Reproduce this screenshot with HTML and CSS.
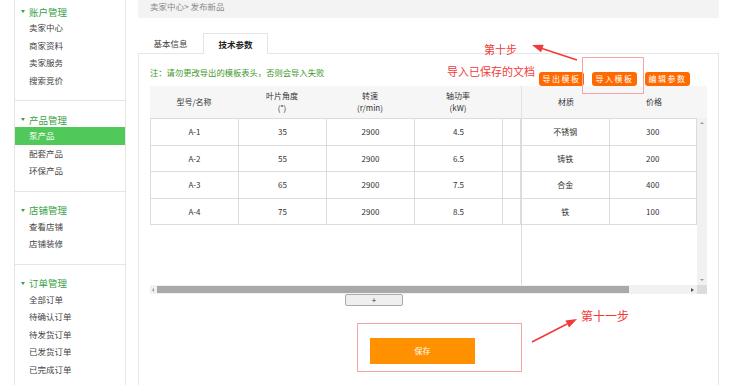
FILE: index.html
```html
<!DOCTYPE html>
<html lang="zh-CN">
<head>
    <meta charset="UTF-8">
    <meta name="viewport" content="width=device-width, initial-scale=1.0">
    <title>发布新品</title>
    <link rel="stylesheet" href="styles.css">
</head>
<body>
    <div class="sidebar">
        <div class="group first">
            <div class="group-title">账户管理</div>
            <div class="menu-item">卖家中心</div>
            <div class="menu-item">商家资料</div>
            <div class="menu-item">卖家服务</div>
            <div class="menu-item">搜索竞价</div>
        </div>
        <div class="group">
            <div class="group-title">产品管理</div>
            <div class="menu-item active">泵产品</div>
            <div class="menu-item">配套产品</div>
            <div class="menu-item">环保产品</div>
        </div>
        <div class="group">
            <div class="group-title">店铺管理</div>
            <div class="menu-item">查看店铺</div>
            <div class="menu-item">店铺装修</div>
        </div>
        <div class="group last">
            <div class="group-title">订单管理</div>
            <div class="menu-item">全部订单</div>
            <div class="menu-item">待确认订单</div>
            <div class="menu-item">待发货订单</div>
            <div class="menu-item">已发货订单</div>
            <div class="menu-item">已完成订单</div>
        </div>
    </div>

    <div class="main">
        <div class="crumb">卖家中心&gt; 发布新品</div>
        <div class="tabs">
            <div class="tab">基本信息</div>
            <div class="tab active">技术参数</div>
        </div>
        <div class="panel">
            <div class="toolbar">
                <div class="note">注：请勿更改导出的模板表头，否则会导入失败</div>
                <div class="tools">
                    <div class="tool-btn">导出模板</div>
                    <div class="tool-btn">导入模板</div>
                    <div class="tool-btn">编辑参数</div>
                </div>
            </div>

            <div class="grid">
                <div class="grid-head">
                    <div class="head-left">
                        <div class="hcell">型号/名称</div>
                        <div class="hcell">叶片角度<br>(°)</div>
                        <div class="hcell">转速<br>(r/min)</div>
                        <div class="hcell">轴功率<br>(kW)</div>
                        <div class="hcell narrow"></div>
                    </div>
                    <div class="head-right">
                        <div class="hcell">材质</div>
                        <div class="hcell">价格</div>
                    </div>
                </div>
                <div class="grid-body">
                    <div class="body-left">
                        <table class="cells">
                            <colgroup><col class="c88"><col class="c88"><col class="c88"><col class="c88"><col></colgroup>
                            <tr><td>A-1</td><td>35</td><td>2900</td><td>4.5</td><td></td></tr>
                            <tr><td>A-2</td><td>55</td><td>2900</td><td>6.5</td><td></td></tr>
                            <tr><td>A-3</td><td>65</td><td>2900</td><td>7.5</td><td></td></tr>
                            <tr><td>A-4</td><td>75</td><td>2900</td><td>8.5</td><td></td></tr>
                        </table>
                    </div>
                    <div class="body-right">
                        <table class="cells">
                            <colgroup><col class="c87"><col></colgroup>
                            <tr><td>不锈钢</td><td>300</td></tr>
                            <tr><td>铸铁</td><td>200</td></tr>
                            <tr><td>合金</td><td>400</td></tr>
                            <tr><td>铁</td><td>100</td></tr>
                        </table>
                    </div>
                    <div class="vbar">
                        <span class="arrow-up"></span>
                        <span class="arrow-down"></span>
                    </div>
                </div>
                <div class="hbar">
                    <div class="htrack">
                        <span class="arrow-left"></span>
                        <span class="thumb"></span>
                        <span class="arrow-right"></span>
                    </div>
                    <div class="corner"></div>
                </div>
            </div>

            <div class="add-row">+</div>
            <div class="save-btn">保存</div>
        </div>
    </div>

    <!-- tutorial marks drawn over the page -->
    <div class="mark-text step-ten">第十步</div>
    <div class="mark-text import-hint">导入已保存的文档</div>
    <div class="mark-text step-eleven">第十一步</div>
    <div class="mark-box box-import"></div>
    <div class="mark-box box-save"></div>
    <svg class="mark-arrows" width="750" height="385" viewBox="0 0 750 385">
        <line x1="577" y1="60" x2="542" y2="48.5" stroke="#f23a3a" stroke-width="1.6"/>
        <polygon points="532,45 543.7,44.7 541.1,52.3" fill="#f23a3a"/>
        <line x1="532" y1="342" x2="567" y2="324" stroke="#f23a3a" stroke-width="1.6"/>
        <polygon points="577,319 569,327.6 565.4,320.4" fill="#f23a3a"/>
    </svg>
</body>
</html>
```

FILE: styles.css
```css
html, body {
    margin: 0;
    height: 385px;
    overflow: hidden;
}
body {
    position: relative;
    display: flex;
    align-items: stretch;
    font-family: "Noto Sans CJK SC", "Noto Sans", sans-serif;
    color: #333;
    background-color: #fff;
}

/* sidebar */
.sidebar {
    margin-left: 14px;
    width: 110px;
    border-left: 1px solid #e6e6e6;
    border-right: 1px solid #e6e6e6;
}
.group {
    padding: 11px 0;
    border-bottom: 1px solid #e6e6e6;
}
.group.first {
    padding-top: 4px;
}
.group.last {
    padding-bottom: 0;
    border-bottom: none;
}
.group-title {
    display: flex;
    align-items: center;
    height: 15px;
    padding-left: 6px;
    font-size: 9.5px;
    color: #3a9f47;
}
.group-title::before {
    content: "";
    width: 0;
    height: 0;
    margin-right: 4px;
    border-left: 2px solid transparent;
    border-right: 2px solid transparent;
    border-top: 3px solid #3a9f47;
}
.menu-item {
    height: 17.5px;
    line-height: 17.5px;
    padding-left: 14px;
    font-size: 8.5px;
    color: #444;
}
.menu-item.active {
    background-color: #50c85a;
    color: #fff;
}

/* main */
.main {
    display: flex;
    flex-direction: column;
    margin-left: 12px;
    width: 581px;
}
.crumb {
    height: 18px;
    line-height: 12px;
    padding-left: 12px;
    background-color: #f3f3f3;
    font-size: 8.5px;
    color: #888;
}
.tabs {
    position: relative;
    z-index: 1;
    display: flex;
    height: 21px;
    margin-top: 15px;
    margin-bottom: -1px;
}
.tab {
    width: 65px;
    line-height: 20px;
    text-align: center;
    font-size: 8.5px;
    color: #444;
}
.tab.active {
    width: 63px;
    border: 1px solid #e3e3e3;
    border-bottom: none;
    background-color: #fff;
    font-weight: bold;
    color: #222;
}
.panel {
    flex: 1;
    padding: 0 11px;
    border: 1px solid #e6e6e6;
    border-bottom: none;
}
.toolbar {
    display: flex;
    justify-content: space-between;
    height: 32px;
}
.note {
    margin-top: 12px;
    line-height: 12px;
    font-size: 8.3px;
    color: #3d9a2b;
}
.tools {
    align-self: flex-end;
    display: flex;
    gap: 8px;
    padding-right: 17px;
}
.tool-btn {
    width: 45px;
    height: 14px;
    line-height: 14px;
    text-align: center;
    border-radius: 3px;
    background-color: #ff6a00;
    color: #fff;
    font-size: 8px;
    letter-spacing: 1.5px;
}

/* parameter grid */
.grid {
    width: 557px;
}
.grid-head {
    display: flex;
    height: 32px;
    background-color: #f6f6f6;
}
.head-left {
    display: flex;
    width: 371px;
}
.head-right {
    display: flex;
    width: 185px;
    border-left: 1px solid #e2e2e2;
}
.hcell {
    display: flex;
    flex-direction: column;
    justify-content: center;
    align-items: center;
    width: 88px;
    line-height: 12px;
    text-align: center;
    font-size: 8px;
    color: #333;
}
.hcell.narrow {
    width: 19px;
}
.grid-body {
    display: flex;
    height: 167px;
}
.body-left {
    width: 371px;
}
.body-right {
    width: 175px;
    border-left: 1px solid #dcdcdc;
}
.cells {
    width: 100%;
    table-layout: fixed;
    border-collapse: collapse;
}
.c88 {
    width: 88px;
}
.c87 {
    width: 87px;
}
.cells td {
    height: 25.5px;
    padding: 0;
    border: 1px solid #dcdcdc;
    text-align: center;
    font-size: 8px;
    color: #333;
}
.body-right .cells td:first-child {
    border-left: none;
}
.vbar {
    display: flex;
    flex-direction: column;
    justify-content: space-between;
    align-items: center;
    width: 10px;
    padding: 4px 0;
    box-sizing: border-box;
    background-color: #f1f1f1;
}
.arrow-up, .arrow-down {
    width: 0;
    height: 0;
    border-left: 2px solid transparent;
    border-right: 2px solid transparent;
}
.arrow-up {
    border-bottom: 2px solid #999;
}
.arrow-down {
    border-top: 2px solid #999;
}
.hbar {
    display: flex;
    height: 9px;
}
.htrack {
    display: flex;
    align-items: center;
    width: 547px;
    background-color: #f1f1f1;
}
.arrow-left, .arrow-right {
    width: 0;
    height: 0;
    border-top: 2px solid transparent;
    border-bottom: 2px solid transparent;
}
.arrow-left {
    margin: 0 3px 0 2px;
    border-right: 2px solid #999;
}
.thumb {
    width: 472px;
    height: 7px;
    background-color: #a9a9a9;
}
.arrow-right {
    margin-left: auto;
    margin-right: 3px;
    border-left: 3px solid #555;
}
.corner {
    width: 10px;
    background-color: #dcdcdc;
}
.add-row {
    width: 56px;
    height: 10px;
    margin-left: 195px;
    line-height: 10px;
    text-align: center;
    border: 1px solid #a9a9a9;
    border-radius: 2px;
    background-color: #efefef;
    font-size: 8px;
    color: #333;
}
.save-btn {
    width: 105px;
    height: 26px;
    margin: 32px 0 0 220px;
    line-height: 26px;
    text-align: center;
    background-color: #ff9100;
    color: #fff;
    font-size: 8px;
}

/* annotation marks */
.mark-text {
    position: absolute;
    line-height: 12px;
    font-size: 11px;
    color: #f23a3a;
}
.step-ten {
    left: 484px;
    top: 43px;
}
.import-hint {
    left: 447px;
    top: 65px;
}
.step-eleven {
    left: 581px;
    top: 310px;
    font-size: 12px;
}
.mark-box {
    position: absolute;
    border: 1px solid #f7a3a3;
}
.box-import {
    left: 582px;
    top: 57px;
    width: 60px;
    height: 35px;
}
.box-save {
    left: 357px;
    top: 323px;
    width: 163px;
    height: 47px;
}
.mark-arrows {
    position: absolute;
    left: 0;
    top: 0;
    pointer-events: none;
}
```
